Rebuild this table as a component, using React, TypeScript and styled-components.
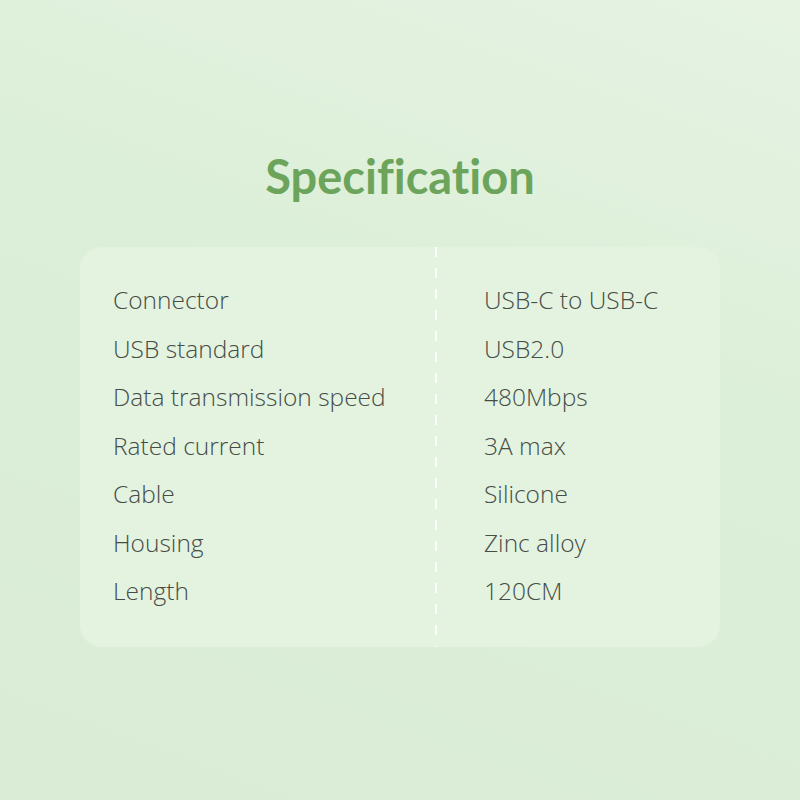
import styled, { createGlobalStyle } from "styled-components";

const specs = [
  { label: "Connector", value: "USB-C to USB-C" },
  { label: "USB standard", value: "USB2.0" },
  { label: "Data transmission speed", value: "480Mbps" },
  { label: "Rated current", value: "3A max" },
  { label: "Cable", value: "Silicone" },
  { label: "Housing", value: "Zinc alloy" },
  { label: "Length", value: "120CM" },
];

const GlobalStyle = createGlobalStyle`
  html, body {
    margin: 0;
    padding: 0;
  }
  body {
    font-family: "Open Sans", "Liberation Sans", sans-serif;
  }
`;

const App = () => {
  return (
    <>
      <GlobalStyle />
      <Page>
        <Title>Specification</Title>
        <Card>
          <Column $wide>
            {specs.map((s) => (
              <Cell key={s.label}>{s.label}</Cell>
            ))}
          </Column>
          <Divider />
          <Column>
            {specs.map((s) => (
              <Cell key={s.label}>{s.value}</Cell>
            ))}
          </Column>
        </Card>
      </Page>
    </>
  );
};

export default App;

const Page = styled.div`
  width: 800px;
  height: 800px;
  box-sizing: border-box;
  padding-top: 147px;
  display: flex;
  flex-direction: column;
  align-items: center;
  background: linear-gradient(200deg, #e6f3e3 0%, #dcefd8 40%, #daecd6 100%);
`;

const Title = styled.h1`
  margin: 0;
  height: 100px;
  font-family: "Lato", "Open Sans", sans-serif;
  font-weight: 700;
  font-size: 47px;
  line-height: 58px;
  letter-spacing: 0;
  font-variant-ligatures: none;
  color: #6ca45b;
`;

const Card = styled.div`
  width: 640px;
  height: 400px;
  border-radius: 22px;
  background: #e3f3e0;
  display: flex;
`;

const Column = styled.div<{ $wide?: boolean }>`
  flex: ${(p) => (p.$wide ? "0 0 355px" : "1")};
  box-sizing: border-box;
  padding: 29px 0 0 ${(p) => (p.$wide ? "33px" : "47px")};
  display: flex;
  flex-direction: column;
`;

const Divider = styled.div`
  width: 2px;
  background: repeating-linear-gradient(
    to bottom,
    rgba(255, 255, 255, 0.85) 0 10px,
    transparent 10px 21px
  );
`;

const Cell = styled.div`
  height: 48.5px;
  line-height: 48.5px;
  font-size: 24.5px;
  font-weight: 300;
  color: #464c46;
  white-space: nowrap;
`;
